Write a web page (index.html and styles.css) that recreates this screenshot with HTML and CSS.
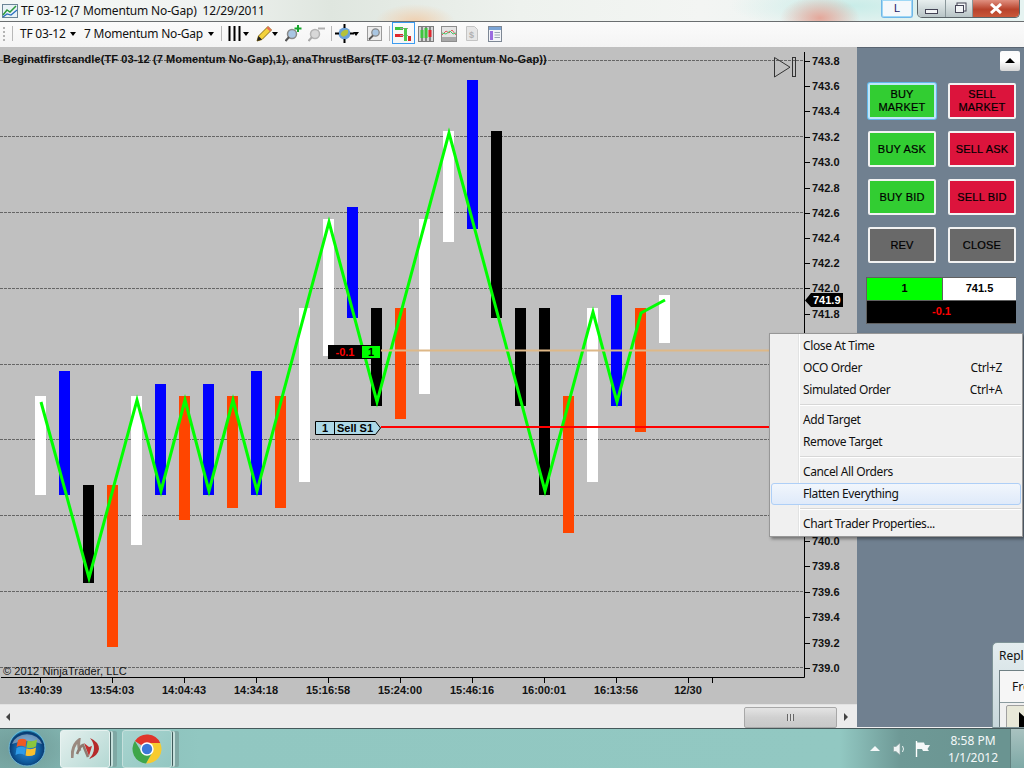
FILE: index.html
```html
<!DOCTYPE html>
<html lang="en">
<head>
    <meta charset="UTF-8">
    <title>TF 03-12 (7 Momentum No-Gap)</title>
    <link rel="stylesheet" href="styles.css">
</head>
<body>

<!-- title bar -->
<div class="titlebar">
    <svg class="app-icon" width="16" height="16" viewBox="0 0 16 16">
        <rect x="0.5" y="1.5" width="15" height="13" fill="#e8f2f6" stroke="#6b8596"/>
        <path d="M1 12 L5 7 L8 9 L14 3" fill="none" stroke="#2b9a3a" stroke-width="1.5"/>
        <path d="M1 14 L5 11 L9 12 L15 7" fill="none" stroke="#2a6fc0" stroke-width="1.2"/>
    </svg>
    <span class="title-text">TF 03-12 (7 Momentum No-Gap)&nbsp; 12/29/2011</span>
    <div class="window-btns">
        <div class="link-btn">L</div>
        <div class="caption">
            <div class="cap cap-min"><span class="min-glyph"></span></div>
            <div class="cap cap-max"><span class="max-glyph"></span></div>
            <div class="cap cap-close">
                <svg width="14" height="11" viewBox="0 0 14 11"><path d="M2 1 L12 10 M12 1 L2 10" stroke="#fff" stroke-width="3"/></svg>
            </div>
        </div>
    </div>
</div>

<!-- toolbar -->
<div class="toolbar">
    <div class="grip"></div>
    <div class="tb-sep sep-first"></div>
    <span class="tb-label">TF 03-12</span>
    <span class="tb-arrow arrow-a"></span>
    <span class="tb-label label-b">7 Momentum No-Gap</span>
    <span class="tb-arrow arrow-b"></span>
    <div class="tb-sep sep-b"></div>
    <svg class="tb-icon icon-bars" width="13" height="15" viewBox="0 0 13 15"><path d="M1.5 0V15M6.5 0V15M11.5 0V15" stroke="#000" stroke-width="2"/></svg>
    <span class="tb-arrow arrow-c"></span>
    <svg class="tb-icon icon-pencil" width="17" height="17" viewBox="0 0 17 17">
        <path d="M1 16 L2.5 11 L12 1.5 L15.5 5 L6 14.5 Z" fill="#f4d23c" stroke="#8a6d14"/>
        <path d="M12 1.5 L15.5 5 L14 6.5 L10.5 3 Z" fill="#e86a5a"/>
        <path d="M1 16 L2.5 11 L6 14.5 Z" fill="#222"/>
    </svg>
    <span class="tb-arrow arrow-d"></span>
    <svg class="tb-icon icon-zoomin" width="17" height="17" viewBox="0 0 17 17">
        <circle cx="7" cy="9" r="4.5" fill="#a9c6e2" stroke="#8a8a8a" stroke-width="1.5"/>
        <path d="M4 12 L0.5 16" stroke="#555" stroke-width="2"/>
        <path d="M13 0V7M9.5 3.5H16.5" stroke="#16a52c" stroke-width="2"/>
    </svg>
    <svg class="tb-icon icon-zoomout" width="17" height="17" viewBox="0 0 17 17">
        <circle cx="7" cy="9" r="4.5" fill="#d8d8d8" stroke="#b4b4b4" stroke-width="1.5"/>
        <path d="M4 12 L0.5 16" stroke="#aaa" stroke-width="2"/>
        <path d="M10 3.5H17" stroke="#b0b0b0" stroke-width="2"/>
    </svg>
    <div class="tb-sep sep-c"></div>
    <svg class="tb-icon icon-cross" width="19" height="19" viewBox="0 0 19 19">
        <circle cx="9.5" cy="9.5" r="6" fill="#6aa0d8"/>
        <path d="M5.5 10 Q8 5 13 6 Q14 10 10 12 Q7 14 5.5 10Z" fill="#b5c23a"/>
        <path d="M9.5 0V4M9.5 15V19M0 9.5H4M15 9.5H19" stroke="#000" stroke-width="2"/>
    </svg>
    <span class="tb-arrow arrow-e"></span>
    <svg class="tb-icon icon-search" width="15" height="15" viewBox="0 0 15 15">
        <rect x="0.5" y="0.5" width="14" height="14" fill="#ececec" stroke="#9a9a9a"/>
        <circle cx="8.5" cy="6.5" r="3.7" fill="#a9c6e2" stroke="#8a8a8a" stroke-width="1.3"/>
        <path d="M6 9.5 L2 13.5" stroke="#555" stroke-width="1.8"/>
    </svg>
    <div class="tb-sep sep-d"></div>
    <div class="tb-active">
        <svg width="17" height="17" viewBox="0 0 17 17">
            <rect x="0" y="2" width="8" height="3" fill="#3ec43e"/>
            <rect x="0" y="9" width="8" height="3" fill="#e0262e"/>
            <path d="M5 3.5H13M5 10.5H13" stroke="#999"/>
            <rect x="9" y="3" width="3" height="13" fill="#4cc94c"/>
            <rect x="13" y="11" width="3" height="5" fill="#d62a2a"/>
        </svg>
    </div>
    <svg class="tb-icon icon-candle" width="16" height="16" viewBox="0 0 16 16">
        <rect x="0.5" y="0.5" width="15" height="15" fill="#d8d8d8" stroke="#7d7d7d"/>
        <path d="M4 1V15M8 1V15M12 1V15" stroke="#333"/>
        <rect x="2.5" y="4" width="3" height="8" fill="#3ec43e"/>
        <rect x="6.5" y="2" width="3" height="10" fill="#3ec43e"/>
        <rect x="10.5" y="4" width="3" height="7" fill="#e0262e"/>
    </svg>
    <svg class="tb-icon icon-line" width="16" height="16" viewBox="0 0 16 16">
        <rect x="0.5" y="0.5" width="15" height="15" fill="#e4e4e4" stroke="#8d8d8d"/>
        <rect x="1" y="11" width="14" height="4" fill="#a8a8a8"/>
        <path d="M1 9 L5 5 L8 7 L11 4 L15 9" fill="none" stroke="#e25a5a"/>
        <path d="M1 7 L5 8 L9 5 L12 8 L15 7" fill="none" stroke="#4cc46c"/>
    </svg>
    <svg class="tb-icon icon-dollar" width="12" height="15" viewBox="0 0 12 15">
        <path d="M0.5 0.5H8.5L11.5 3.5V14.5H0.5Z" fill="#e6e6e6" stroke="#c4c4c4"/>
        <text x="3" y="11.5" class="dollar-text">$</text>
    </svg>
    <svg class="tb-icon icon-panel" width="14" height="16" viewBox="0 0 14 16">
        <rect x="0.5" y="0.5" width="13" height="15" fill="#f2f4f8" stroke="#7d8794"/>
        <rect x="1" y="1" width="12" height="3" fill="#7aa4d6"/>
        <rect x="2" y="5" width="3" height="9" fill="#9a6ae0"/>
        <path d="M6.5 6.5H12M6.5 9H12M6.5 11.5H12" stroke="#9aa4b4"/>
    </svg>
</div>

<!-- chart and chart trader -->
<div class="workspace">
    <div class="chart-col">
        <svg class="chart" width="857" height="657" viewBox="0 47 857 657">
            <!-- grid -->
            <g class="grid">
                <path d="M0 60.5H804M0 136.5H804M0 212.5H804M0 288.5H804M0 364.5H804M0 439.5H804M0 515.5H804M0 591.5H804M0 667.5H804"/>
            </g>

            <!-- bars -->
            <g class="bars">
                <rect class="w" x="35" y="396" width="11" height="99"/>
                <rect class="b" x="59" y="371" width="11" height="124"/>
                <rect class="k" x="83" y="485" width="11" height="98"/>
                <rect class="o" x="107" y="485" width="11" height="162"/>
                <rect class="w" x="131" y="396" width="11" height="149"/>
                <rect class="b" x="155" y="384" width="11" height="111"/>
                <rect class="o" x="179" y="396" width="11" height="124"/>
                <rect class="b" x="203" y="384" width="11" height="111"/>
                <rect class="o" x="227" y="396" width="11" height="112"/>
                <rect class="b" x="251" y="371" width="11" height="124"/>
                <rect class="o" x="275" y="396" width="11" height="112"/>
                <rect class="w" x="299" y="308" width="11" height="174"/>
                <rect class="w" x="323" y="219" width="11" height="137"/>
                <rect class="b" x="347" y="207" width="11" height="111"/>
                <rect class="k" x="371" y="308" width="11" height="98"/>
                <rect class="o" x="395" y="308" width="11" height="111"/>
                <rect class="w" x="419" y="219" width="11" height="175"/>
                <rect class="w" x="443" y="131" width="11" height="111"/>
                <rect class="b" x="467" y="80" width="11" height="149"/>
                <rect class="k" x="491" y="131" width="11" height="187"/>
                <rect class="k" x="515" y="308" width="11" height="98"/>
                <rect class="k" x="539" y="308" width="11" height="187"/>
                <rect class="o" x="563" y="396" width="11" height="137"/>
                <rect class="w" x="587" y="308" width="11" height="174"/>
                <rect class="b" x="611" y="295" width="11" height="111"/>
                <rect class="o" x="635" y="308" width="11" height="124"/>
                <rect class="w" x="659" y="295" width="11" height="48"/>
            </g>

            <polyline class="thrust" points="41,402 89,578 137,400 161,491 185,400 209,491 233,400 257,491 329,222 377,402 449,133 545,491 593,312 617,402 641,313 665,300"/>

            <!-- order lines -->
            <path class="line-entry" d="M381 350.5H769"/>
            <path class="line-stop" d="M381 427H769"/>

            <g class="pos-marker">
                <rect x="328" y="345" width="53" height="14" fill="#000"/>
                <rect x="362" y="346" width="18" height="12" fill="#0f0"/>
                <text x="345" y="356" text-anchor="middle" fill="#f00">-0.1</text>
                <text x="371" y="356" text-anchor="middle" fill="#000">1</text>
            </g>
            <g class="stop-marker">
                <path d="M315.5 421.5H375.5L380.5 428L375.5 434.5H315.5Z" fill="#add8e6" stroke="#000"/>
                <path d="M334.5 421V435" stroke="#000"/>
                <text x="325" y="432" text-anchor="middle">1</text>
                <text x="337" y="432">Sell S1</text>
            </g>

            <!-- axes -->
            <g class="axis">
                <path d="M804.5 52V677.5H1"/>
                <path d="M804 61.5H810M804 86.5H810M804 111.5H810M804 137.5H810M804 162.5H810M804 188.5H810M804 213.5H810M804 238.5H810M804 263.5H810M804 288.5H810M804 314.5H810M804 541.5H810M804 566.5H810M804 592.5H810M804 617.5H810M804 643.5H810M804 668.5H810"/>
                <path d="M40.5 677V683M112.5 677V683M184.5 677V683M256.5 677V683M328.5 677V683M400.5 677V683M472.5 677V683M544.5 677V683M616.5 677V683M688.5 677V683M712.5 677V683"/>
            </g>
            <g class="labels">
                <text x="812" y="65">743.8</text>
                <text x="812" y="90">743.6</text>
                <text x="812" y="115">743.4</text>
                <text x="812" y="141">743.2</text>
                <text x="812" y="166">743.0</text>
                <text x="812" y="192">742.8</text>
                <text x="812" y="217">742.6</text>
                <text x="812" y="242">742.4</text>
                <text x="812" y="267">742.2</text>
                <text x="812" y="292">742.0</text>
                <text x="812" y="318">741.8</text>
                <text x="812" y="545">740.0</text>
                <text x="812" y="570">739.8</text>
                <text x="812" y="596">739.6</text>
                <text x="812" y="621">739.4</text>
                <text x="812" y="647">739.2</text>
                <text x="812" y="672">739.0</text>
            </g>
            <g class="labels times">
                <text x="40" y="694">13:40:39</text>
                <text x="112" y="694">13:54:03</text>
                <text x="184" y="694">14:04:43</text>
                <text x="256" y="694">14:34:18</text>
                <text x="328" y="694">15:16:58</text>
                <text x="400" y="694">15:24:00</text>
                <text x="472" y="694">15:46:16</text>
                <text x="544" y="694">16:00:01</text>
                <text x="616" y="694">16:13:56</text>
                <text x="688" y="694">12/30</text>
            </g>

            <g class="last-price">
                <path d="M805 300.5L811 293H843V307H811Z" fill="#000"/>
                <text x="813" y="304">741.9</text>
            </g>

            <text class="legend" x="3" y="63">Beginatfirstcandle(TF 03-12 (7 Momentum No-Gap),1), anaThrustBars(TF 03-12 (7 Momentum No-Gap))</text>
            <text class="copyright" x="3" y="675">© 2012 NinjaTrader, LLC</text>

            <g class="collapse">
                <path d="M774.5 57.5V77L790 67.2Z"/>
                <rect x="792.5" y="57.5" width="3" height="19"/>
            </g>
        </svg>

        <div class="hscroll">
            <span class="scroll-arrow arrow-left"></span>
            <div class="scroll-thumb"><span class="thumb-grip"></span></div>
            <span class="scroll-arrow arrow-right"></span>
        </div>
    </div>

    <div class="trader-panel">
        <div class="panel-top"><div class="collapse-btn"></div></div>
        <div class="order-btns">
            <div class="order-btn buy focus">BUY<br>MARKET</div>
            <div class="order-btn sell">SELL<br>MARKET</div>
            <div class="order-btn buy">BUY ASK</div>
            <div class="order-btn sell">SELL ASK</div>
            <div class="order-btn buy">BUY BID</div>
            <div class="order-btn sell">SELL BID</div>
            <div class="order-btn gray">REV</div>
            <div class="order-btn gray">CLOSE</div>
        </div>
        <div class="position-box">
            <div class="pos-qty">1</div>
            <div class="pos-price">741.5</div>
            <div class="pos-pnl">-0.1</div>
        </div>
    </div>
</div>

<!-- taskbar -->
<div class="taskbar">
    <svg class="start-orb" width="38" height="38" viewBox="0 0 38 38">
        <defs>
            <radialGradient id="orb" cx="50%" cy="55%" r="55%">
                <stop offset="0" stop-color="#2f8fd8"/>
                <stop offset="0.65" stop-color="#0f5a9c"/>
                <stop offset="0.88" stop-color="#0a3a70"/>
                <stop offset="1" stop-color="#2fb4d8"/>
            </radialGradient>
        </defs>
        <circle cx="19" cy="19" r="18" fill="url(#orb)" stroke="#6fb8d8"/>
        <path d="M4 15 A15.5 13 0 0 1 34 15 Q19 9 4 15Z" fill="#fff" opacity="0.4"/>
        <path d="M10 11 Q14 8.500 18.500 11 L17.500 18 Q13 15.500 8.500 18Z" fill="#ef5a24"/>
        <path d="M19.500 11.500 Q24 13.500 29 10.500 L28 17.500 Q23.500 20 18.500 18.500Z" fill="#8ac63f"/>
        <path d="M8.500 19 Q13 16.500 17.500 19 L16.500 26 Q12 23.500 7.500 26Z" fill="#2f9be8"/>
        <path d="M18.500 19.500 Q23 21.500 28 18.500 L27 25.500 Q22.500 28 17.500 26.500Z" fill="#fbc02d"/>
    </svg>

    <div class="task-btn">
        <svg width="28" height="21" viewBox="0 0 28 21">
            <path d="M1 20 Q1 7 8 2 Q7 9 9 13" fill="none" stroke="#9a8a80" stroke-width="3"/>
            <path d="M6 16 Q9 8 12 7 L17 19" fill="none" stroke="#8d7a70" stroke-width="2.500"/>
            <path d="M19 0 Q28 4 28 11 Q27 18 18 21 Q23 16 23 10 Q23 5 19 0Z" fill="#b52a2a"/>
            <path d="M13 5 L18 18 L21 8 L18 9Z" fill="#c2302f"/>
        </svg>
    </div>
    <div class="task-btn chrome-btn">
        <svg width="30" height="30" viewBox="0 0 30 30">
            <path d="M15 15 L2.9 7 A14.5 14.5 0 0 1 28.2 9 L15 9Z" fill="#e0352b"/>
            <path d="M15 15 L15 9 L28.2 9 A14.5 14.5 0 0 1 14 29.5 L21 17Z" fill="#f7cb2f"/>
            <path d="M15 15 L21 17 L14 29.5 A14.5 14.5 0 0 1 2.9 7 L9.6 18Z" fill="#3fa64a"/>
            <circle cx="15" cy="15" r="6.7" fill="#fff"/>
            <circle cx="15" cy="15" r="5.2" fill="#3b78d8"/>
        </svg>
    </div>

    <div class="tray">
        <span class="tray-arrow"></span>
        <svg class="tray-sound" width="13" height="14" viewBox="0 0 13 14">
            <path d="M0.5 4.5H3L7 1V13L3 9.5H0.5Z" fill="#eef4f4" stroke="#8aa0a0" stroke-width="0.7"/>
            <path d="M9.5 4Q11.5 7 9.5 10" fill="none" stroke="#f0f6f6"/>
        </svg>
        <svg class="tray-flag" width="16" height="16" viewBox="0 0 16 16">
            <path d="M1.5 0V16" stroke="#fff" stroke-width="1.4"/>
            <path d="M2 1.5H9L10 4H15L12.5 8L14 10H8L7 8H2Z" fill="#f4f8f8"/>
        </svg>
        <div class="clock">8:58 PM<br>1/1/2012</div>
    </div>
    <div class="show-desktop"></div>
</div>

<!-- floating: context menu -->
<div class="context-menu">
    <div class="menu-item"><span>Close At Time</span></div>
    <div class="menu-item"><span>OCO Order</span><span class="shortcut">Ctrl+Z</span></div>
    <div class="menu-item"><span>Simulated Order</span><span class="shortcut">Ctrl+A</span></div>
    <div class="menu-sep"></div>
    <div class="menu-item"><span>Add Target</span></div>
    <div class="menu-item"><span>Remove Target</span></div>
    <div class="menu-sep"></div>
    <div class="menu-item"><span>Cancel All Orders</span></div>
    <div class="menu-item hot"><span>Flatten Everything</span></div>
    <div class="menu-sep"></div>
    <div class="menu-item"><span>Chart Trader Properties...</span></div>
</div>

<!-- floating: replay window, mostly off screen -->
<div class="replay-win">
    <div class="replay-title">Repl</div>
    <div class="replay-body">
        <div class="replay-from">Fro</div>
        <div class="replay-inner">
            <div class="replay-btn"></div>
        </div>
    </div>
</div>

</body>
</html>
```

FILE: styles.css
```css
/* page */
html, body {
    margin: 0;
    padding: 0;
}
body {
    position: relative;
    width: 1024px;
    height: 768px;
    overflow: hidden;
    display: flex;
    flex-direction: column;
    font-family: "Noto Sans", "Liberation Sans", sans-serif;
    font-size: 12px;
    color: #111;
    background: #c0c0c0;
}

/* title bar */
.titlebar {
    height: 21px;
    flex: none;
    display: flex;
    align-items: center;
    padding-left: 2px;
    box-sizing: border-box;
    background:
        radial-gradient(ellipse 40px 22px at 820px 18px, #e4a79a 0, rgba(228,167,154,0) 100%),
        radial-gradient(ellipse 40px 18px at 415px 22px, #f0cfae 0, rgba(240,207,174,0) 100%),
        radial-gradient(ellipse 120px 24px at 850px 6px, #c8ece8 0, rgba(200,236,232,0) 100%),
        linear-gradient(90deg, #f4f7f6 0, #f0f3f1 200px, #dfe6df 330px, #eef2ee 520px, #f3f5f3 700px, #e6f3f1 1024px);
}
.app-icon {
    flex: none;
}
.title-text {
    margin-left: 3px;
    white-space: pre;
    font-size: 12px;
    letter-spacing: -0.17px;
}
.window-btns {
    margin-left: auto;
    display: flex;
    align-self: flex-start;
    margin-right: 4px;
}
.link-btn {
    width: 32px;
    height: 18px;
    box-sizing: border-box;
    border: 1px solid #6fb6e8;
    border-top: 0;
    border-radius: 0 0 3px 3px;
    background: #f4f8fb;
    box-shadow: inset 0 0 0 1px #9fd8f5;
    text-align: center;
    line-height: 16px;
    font-family: "Liberation Sans", sans-serif;
    font-size: 11px;
    color: #222266;
    margin-right: 4px;
}
.caption {
    display: flex;
    height: 17px;
    border: 1px solid #5a6468;
    border-top: 0;
    border-radius: 0 0 5px 5px;
    overflow: hidden;
}
.cap {
    display: flex;
    align-items: center;
    justify-content: center;
    border-right: 1px solid #8a979a;
}
.cap-min {
    width: 27px;
    background: linear-gradient(#e8efef, #b8c4c6);
}
.cap-max {
    width: 26px;
    background: linear-gradient(#e8efef, #b8c4c6);
}
.cap-close {
    width: 46px;
    border-right: 0;
    background: linear-gradient(#e09080, #b8432c 55%, #c9583a);
}
.min-glyph {
    display: block;
    width: 11px;
    height: 3px;
    margin-top: 6px;
    border: 1px solid #445;
    background: #f2f5f6;
}
.max-glyph {
    display: block;
    width: 7px;
    height: 6px;
    border: 1px solid #445;
    background: #f2f5f6;
    box-shadow: 2px -2px 0 -0.5px #f2f5f6, 2px -2px 0 0.5px #445;
}

/* toolbar */
.toolbar {
    position: relative;
    height: 26px;
    flex: none;
    box-sizing: border-box;
    border-top: 1px solid #6a6e70;
    background: linear-gradient(#fbfbfb, #f4f4f4);
}
.toolbar > * {
    position: absolute;
}
.grip {
    left: 3px;
    top: 5px;
    width: 2px;
    height: 14px;
    background: repeating-linear-gradient(#b4b4b4 0 2px, transparent 2px 4px);
}
.tb-sep {
    top: 4px;
    width: 1px;
    height: 15px;
    background: #b8b8b8;
}
.sep-first { left: 12px; }
.sep-b { left: 221px; }
.sep-c { left: 331px; }
.sep-d { left: 389px; }
.tb-label {
    left: 20px;
    top: 3px;
    font-size: 12px;
    letter-spacing: -0.22px;
    line-height: 17px;
    white-space: nowrap;
}
.label-b { left: 84px; }
.tb-arrow {
    top: 10px;
    width: 0;
    height: 0;
    border-left: 3.5px solid transparent;
    border-right: 3.5px solid transparent;
    border-top: 4px solid #000;
}
.arrow-a { left: 70px; }
.arrow-b { left: 208px; }
.arrow-c { left: 243px; }
.arrow-d { left: 272px; }
.arrow-e { left: 353px; }
.icon-bars { left: 228px; top: 4px; }
.icon-pencil { left: 256px; top: 3px; }
.icon-zoomin { left: 285px; top: 3px; }
.icon-zoomout { left: 308px; top: 3px; }
.icon-cross { left: 335px; top: 2px; }
.icon-search { left: 367px; top: 4px; }
.icon-candle { left: 418px; top: 4px; }
.icon-line { left: 441px; top: 4px; }
.icon-dollar { left: 466px; top: 4px; }
.icon-panel { left: 488px; top: 4px; }
.dollar-text {
    font-family: "Liberation Sans", sans-serif;
    font-size: 9px;
    font-weight: bold;
    fill: #b0b0b0;
}
.tb-active {
    left: 392px;
    top: 0;
    width: 23px;
    height: 22px;
    box-sizing: border-box;
    border: 1px solid #3b9cf0;
    display: flex;
    align-items: center;
    justify-content: center;
}

/* main area */
.workspace {
    flex: 1;
    display: flex;
    min-height: 0;
}
.chart-col {
    width: 857px;
    flex: none;
    display: flex;
    flex-direction: column;
}
.chart {
    display: block;
    flex: none;
    background: #c0c0c0;
    font-family: "Liberation Sans", Arial, sans-serif;
    font-size: 11px;
}
.grid path {
    fill: none;
    stroke: #666;
    stroke-dasharray: 3 1;
}
.bars .w { fill: #fff; }
.bars .b { fill: #00f; }
.bars .k { fill: #000; }
.bars .o { fill: #ff4500; }
.thrust {
    fill: none;
    stroke: #0f0;
    stroke-width: 3;
}
.line-entry {
    stroke: #deb887;
    stroke-width: 2;
}
.line-stop {
    stroke: #f00;
    stroke-width: 2;
}
.pos-marker text, .stop-marker text {
    font-weight: bold;
}
.axis path {
    fill: none;
    stroke: #000;
}
.labels text {
    font-weight: bold;
    fill: #111;
}
.times text {
    text-anchor: middle;
}
.last-price text {
    font-size: 11px;
    font-weight: bold;
    fill: #fff;
}
.legend {
    font-weight: bold;
    letter-spacing: 0.095px;
    fill: #111;
}
.copyright {
    letter-spacing: 0.1px;
    fill: #111;
}
.collapse path, .collapse rect {
    fill: none;
    stroke: #333;
}

/* scroll bar */
.hscroll {
    flex: 1;
    display: flex;
    align-items: center;
    padding-left: 6px;
    background: #ececec;
    border-top: 1px solid #e2e2e2;
}
.scroll-arrow {
    width: 0;
    height: 0;
    border-top: 4px solid transparent;
    border-bottom: 4px solid transparent;
}
.arrow-left {
    border-right: 4px solid #444;
}
.arrow-right {
    border-left: 4px solid #444;
    margin-left: 7px;
}
.scroll-thumb {
    width: 93px;
    height: 21px;
    box-sizing: border-box;
    margin-left: 734px;
    margin-top: 1px;
    border: 1px solid #a8a8a8;
    border-radius: 2px;
    background: linear-gradient(#e4e4e4, #d0d0d0 50%, #c8c8c8);
    display: flex;
    align-items: center;
    justify-content: center;
}
.thumb-grip {
    width: 7px;
    height: 7px;
    background: repeating-linear-gradient(90deg, #666 0 1px, #ddd 1px 3px);
}

/* chart trader */
.trader-panel {
    flex: 1;
    box-sizing: border-box;
    background: #708090;
    border-top: 1px solid #5a6572;
    border-bottom: 1px solid #f0f0f0;
    padding-left: 11px;
}
.panel-top {
    height: 35px;
    display: flex;
    justify-content: flex-end;
    padding: 3px 4px 0 0;
    box-sizing: border-box;
}
.collapse-btn {
    width: 20px;
    height: 20px;
    border-radius: 2px;
    background: linear-gradient(#fbfbfb, #fff 50%, #d6d6d6);
    position: relative;
}
.collapse-btn::after {
    content: "";
    position: absolute;
    left: 5px;
    top: 7px;
    border-left: 5px solid transparent;
    border-right: 5px solid transparent;
    border-bottom: 5px solid #000;
}
.order-btns {
    display: grid;
    grid-template-columns: 68px 68px;
    grid-auto-rows: 36px;
    gap: 12px;
}
.order-btn {
    box-sizing: border-box;
    display: flex;
    align-items: center;
    justify-content: center;
    text-align: center;
    border: 2px solid #f2f2f2;
    border-radius: 2px;
    font-family: "Liberation Sans", Arial, sans-serif;
    font-size: 11px;
    letter-spacing: 0.2px;
    line-height: 13px;
    color: #000;
    -webkit-text-stroke: 0.2px #000;
}
.buy { background: #32cd32; }
.sell { background: #dc143c; }
.gray { background: #696969; }
.focus {
    border-color: #bfe6f8;
    box-shadow: 0 0 0 1px #62b8ea;
}
.position-box {
    display: grid;
    grid-template-columns: 75px 73px;
    grid-auto-rows: 22px;
    gap: 1px;
    width: 148px;
    margin: 14px 0 0 -2px;
    padding: 1px;
    background: #606060;
    font-family: "Liberation Sans", Arial, sans-serif;
    font-size: 11px;
    font-weight: bold;
    line-height: 21px;
    text-align: center;
}
.pos-qty { background: #0f0; color: #000; }
.pos-price { background: #fff; color: #000; }
.pos-pnl {
    grid-column: 1 / 3;
    background: #000;
    color: #f00;
}

/* taskbar */
.taskbar {
    position: relative;
    height: 40px;
    flex: none;
    display: flex;
    align-items: center;
    box-sizing: border-box;
    border-top: 1px solid #45585a;
    background:
        radial-gradient(ellipse 70px 40px at 20px 20px, #6f9a97 0, rgba(111,154,151,0) 100%),
        linear-gradient(90deg, #82b4b0 0, #91c7c1 200px, #92c8c2 840px, #6e9996 900px, #6a9491 1000px);
}
.start-orb {
    flex: none;
    margin-left: 8px;
    margin-top: -2px;
}
.task-btn {
    flex: none;
    width: 50px;
    height: 38px;
    box-sizing: border-box;
    margin-left: 14px;
    display: flex;
    align-items: center;
    justify-content: center;
    border: 1px solid #e6f2f0;
    border-radius: 3px;
    background: linear-gradient(135deg, #e4f0ee, #b4d8d3);
    box-shadow: 2px 0 0 -1px #3f5a5a, 4px 0 0 -1px #c5e0dc, 8px 0 0 -1px #7fa8a4;
}
.chrome-btn {
    background: linear-gradient(135deg, #a8d4cf, #93c7c2);
    border-color: #c5e0dc;
    margin-left: 12px;
}
.tray {
    margin-left: auto;
    display: flex;
    align-items: center;
    height: 100%;
    color: #f4f8f8;
}
.tray-arrow {
    width: 0;
    height: 0;
    border-left: 5px solid transparent;
    border-right: 5px solid transparent;
    border-bottom: 5px solid #f4f8f8;
}
.tray-sound {
    margin-left: 13px;
}
.tray-flag {
    margin-left: 9px;
}
.clock {
    width: 74px;
    margin-left: 5px;
    text-align: center;
    font-size: 12px;
    line-height: 17px;
}
.show-desktop {
    width: 14px;
    height: 100%;
    flex: none;
    box-sizing: border-box;
    border-left: 1px solid #60807e;
    background: linear-gradient(#a9c2c0, #7ea9a6);
}

/* context menu */
.context-menu {
    position: absolute;
    left: 769px;
    top: 333px;
    width: 254px;
    height: 204px;
    box-sizing: border-box;
    padding: 1px;
    border: 1px solid #979797;
    background:
        linear-gradient(90deg, transparent 28px, #e2e3e3 28px, #e2e3e3 29px, #fff 29px, #fff 30px, transparent 30px),
        #f0f0f0;
    box-shadow: 2px 2px 3px rgba(0, 0, 0, 0.4);
}
.menu-item {
    display: flex;
    justify-content: space-between;
    height: 22px;
    line-height: 22px;
    padding: 0 19px 0 32px;
    font-size: 12px;
    letter-spacing: -0.38px;
    color: #111;
    box-sizing: border-box;
}
.menu-sep {
    height: 8px;
    margin-left: 29px;
    background: linear-gradient(transparent 3px, #d7d7d7 3px, #d7d7d7 4px, #fff 4px, #fff 5px, transparent 5px);
}
.hot {
    border: 1px solid #aecff7;
    border-radius: 3px;
    background: linear-gradient(#f1f6fc, #dfeafa);
    line-height: 20px;
    padding-left: 31px;
}

/* replay window */
.replay-win {
    position: absolute;
    left: 992px;
    top: 642px;
    width: 60px;
    height: 86px;
    box-sizing: border-box;
    padding-left: 6px;
    border: 1px solid #7f9498;
    border-radius: 5px 0 0 0;
    background: linear-gradient(#e4edef, #c8d8dc);
    overflow: hidden;
}
.replay-title {
    height: 27px;
    line-height: 26px;
    font-size: 12px;
    color: #111;
}
.replay-body {
    height: 60px;
    border: 1px solid #6f8084;
    background: #f6f6f6;
    padding-left: 12px;
}
.replay-from {
    height: 31px;
    line-height: 31px;
    font-size: 12px;
}
.replay-inner {
    margin-left: -12px;
    height: 30px;
    border-top: 1px solid #8a9a9e;
    background: #f0f0f0;
    padding: 2px 0 0 6px;
}
.replay-btn {
    position: relative;
    width: 40px;
    height: 26px;
    box-sizing: border-box;
    border: 1px solid #a0a0a0;
    border-radius: 2px;
    background: #e8e8d8;
}
/* mouse pointer sitting on the button */
.replay-btn::after {
    content: "";
    position: absolute;
    left: 12px;
    top: 6px;
    width: 14px;
    height: 18px;
    background: #000;
    clip-path: polygon(0 0, 100% 70%, 60% 70%, 60% 100%, 0 100%);
}
```
